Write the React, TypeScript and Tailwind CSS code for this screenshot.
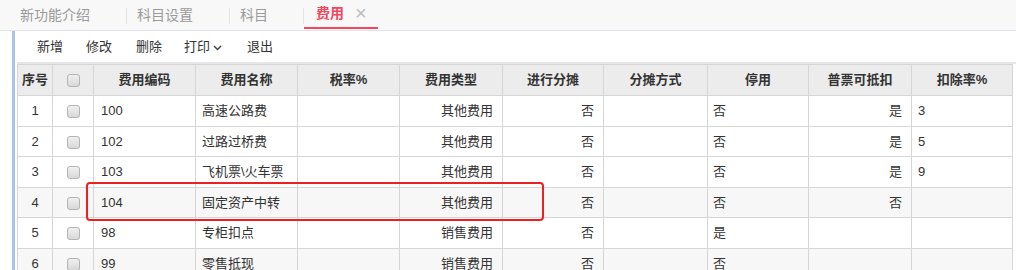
import React from 'react';

const FONT = "font-['Liberation_Sans','Noto_Sans_CJK_SC',sans-serif]";

const TABS = [
  { label: '新功能介绍', w: 'w-[127px]' },
  { label: '科目设置', w: 'w-[103px]' },
  { label: '科目', w: 'w-[74px]' },
];

const COLS = [
  { title: '序号', w: 'w-[35px]', align: 'text-center' },
  { title: '', w: 'w-[41px]', align: 'text-center' },
  { title: '费用编码', w: 'w-[102px]', align: 'text-left pl-[7px]' },
  { title: '费用名称', w: 'w-[102px]', align: 'text-left pl-[6px]' },
  { title: '税率%', w: 'w-[102px]', align: 'text-left' },
  { title: '费用类型', w: 'w-[103px]', align: 'text-right pr-[9px]' },
  { title: '进行分摊', w: 'w-[101px]', align: 'text-right pr-[9px]' },
  { title: '分摊方式', w: 'w-[104px]', align: 'text-left' },
  { title: '停用', w: 'w-[101px]', align: 'text-left pl-[5px]' },
  { title: '普票可抵扣', w: 'w-[103px]', align: 'text-right pr-[9px]' },
  { title: '扣除率%', w: 'w-[101px]', align: 'text-left pl-[6px]' },
];

const ROWS = [
  ['1', '', '100', '高速公路费', '', '其他费用', '否', '', '否', '是', '3'],
  ['2', '', '102', '过路过桥费', '', '其他费用', '否', '', '否', '是', '5'],
  ['3', '', '103', '飞机票\\火车票', '', '其他费用', '否', '', '否', '是', '9'],
  ['4', '', '104', '固定资产中转', '', '其他费用', '否', '', '否', '否', ''],
  ['5', '', '98', '专柜扣点', '', '销售费用', '否', '', '是', '', ''],
  ['6', '', '99', '零售抵现', '', '销售费用', '否', '', '否', '', ''],
];

const Check: React.FC = () => (
  <span className="inline-block w-[13px] h-[13px] rounded-[3px] border border-[#b4b4b4] bg-gradient-to-b from-[#f0f0f0] to-[#d8d8d8] align-middle" />
);

const App: React.FC = () => {
  return (
    <div className={`w-[1016px] h-[270px] overflow-hidden bg-white text-[#333] ${FONT}`}>
      {/* ── Tab strip ─────────────────────────────────────────────── */}
      <div className="h-[31px] bg-[#f8f8f8] border-b border-[#e2e2ea] flex items-stretch">
        {TABS.map((t, i) => (
          <div key={i} className={`${t.w} flex items-center pl-[20px] pr-0 relative`}>
            <span className={`text-[14px] text-[#9a9a9a] ${i === 0 ? '' : '-ml-[10px]'}`}>{t.label}</span>
            <span className="absolute right-0 top-[8px] h-[16px] w-px bg-[#e4e4e4]" />
          </div>
        ))}
        <div className="w-[74px] flex items-center pl-[12px] gap-[11px] border-b-2 border-[#f2475e] mb-[1px]">
          <span className="text-[14px] font-bold text-[#f2475e]">费用</span>
          <span className="text-[20px] font-light leading-none text-[#bdbdbd] -mt-[2px]">×</span>
        </div>
      </div>

      {/* ── Body with left accent ─────────────────────────────────── */}
      <div className="flex h-[239px]">
        <div className="w-[12px] bg-white shrink-0" />
        <div className="w-[3px] bg-[#a9c3ea] shrink-0" />
        <div className="flex-1 pl-[2px] flex flex-col">
          {/* Toolbar */}
          <div className="h-[31px] shrink-0 flex items-center text-[13px] text-[#333] pl-[20px] pt-[1px]">
            <span className="w-[49px]">新增</span>
            <span className="w-[50px]">修改</span>
            <span className="w-[48px]">删除</span>
            <span className="w-[63px] flex items-center gap-[2px]">
              打印
              <svg width="9" height="6" viewBox="0 0 9 6" className="ml-[1px] mt-[1px]">
                <path d="M1 1l3.5 3.5L8 1" fill="none" stroke="#444" strokeWidth="1.5" />
              </svg>
            </span>
            <span>退出</span>
          </div>
          <div className="h-[2px] shrink-0 bg-[#e6e6e6]" />

          {/* Grid */}
          <div className="relative shrink-0">
            <table className="border-collapse table-fixed w-[995px] text-[13px]">
              <thead>
                <tr className="h-[31px] bg-[#ececec]">
                  {COLS.map((c, i) => (
                    <th
                      key={i}
                      className={`${c.w} border border-[#d6d6d6] font-bold text-center text-[#333] p-0`}
                    >
                      {i === 1 ? <Check /> : c.title}
                    </th>
                  ))}
                </tr>
              </thead>
              <tbody>
                {ROWS.map((r, ri) => (
                  <tr key={ri} className={`h-[30.6px] ${ri === 3 || ri === 5 ? 'bg-[#f7f7f7]' : 'bg-white'}`}>
                    {r.map((v, ci) => (
                      <td
                        key={ci}
                        className={`border border-[#d6d6d6] p-0 ${COLS[ci].align} text-[#333]`}
                      >
                        {ci === 1 ? <Check /> : v}
                      </td>
                    ))}
                  </tr>
                ))}
              </tbody>
            </table>

            {/* Highlight box */}
            <div className="absolute left-[69px] top-[118px] w-[458px] h-[39px] border-2 border-[#f01f1f] rounded-[4px] pointer-events-none" />
          </div>
        </div>
      </div>
    </div>
  );
};

export default App;
